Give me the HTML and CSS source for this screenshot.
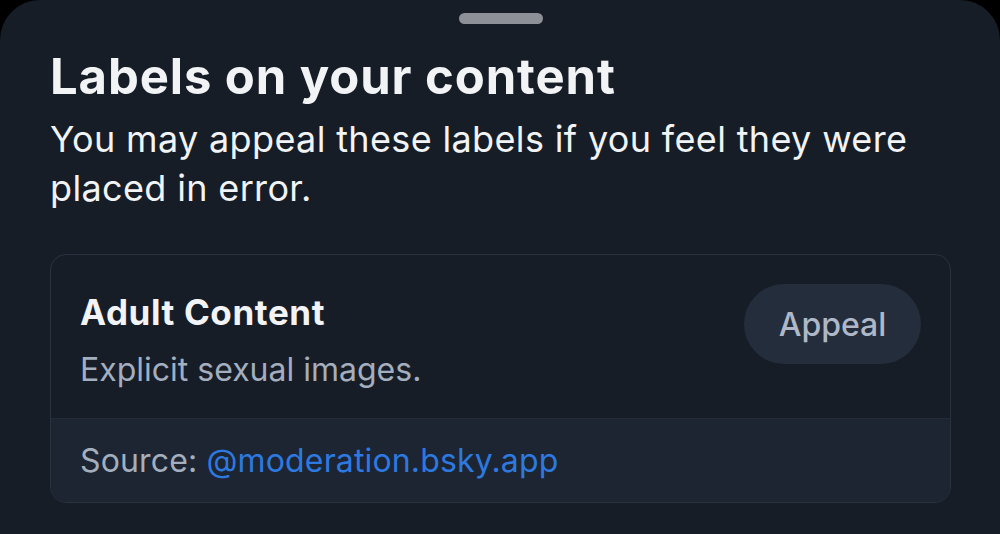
FILE: index.html
```html
<!DOCTYPE html>
<html>
<head>
<meta charset="utf-8">
<link rel="stylesheet" href="styles.css">
</head>
<body>
<div class="sheet">
  <div class="handle-row"><div class="handle"></div></div>
  <h1 class="title">Labels on your content</h1>
  <p class="subtitle">You may appeal these labels if you feel they were placed in error.</p>
  <div class="card">
    <div class="card-main">
      <div class="card-text">
        <div class="label-name">Adult Content</div>
        <div class="label-desc">Explicit sexual images.</div>
      </div>
      <button class="appeal">Appeal</button>
    </div>
    <div class="card-source">Source: <span class="link">@moderation.bsky.app</span></div>
  </div>
</div>
</body>
</html>
```
FILE: styles.css
```css
html, body {
  margin: 0;
  padding: 0;
  background: #000;
  width: 1000px;
  height: 534px;
  overflow: hidden;
}
.sheet {
  height: 534px;
  background: #161d27;
  border-radius: 40px 40px 0 0;
  padding: 0 49px 0 50px;
  font-family: Inter, "Noto Sans", sans-serif;
  color: #f1f3f5;
  box-sizing: border-box;
}
.handle-row {
  display: flex;
  justify-content: center;
  padding-top: 13px;
}
.handle {
  width: 84px;
  height: 11px;
  border-radius: 6px;
  background: #8d9197;
}
.title {
  margin: 23px 0 0 0;
  font-size: 49px;
  font-weight: 700;
  line-height: 60px;
  letter-spacing: 0.9px;
}
.subtitle {
  margin: 8px 0 0 0;
  font-size: 36px;
  line-height: 49px;
  font-weight: 400;
  letter-spacing: 0.35px;
  color: #f1f3f5;
  max-width: 880px;
}
.card {
  margin-top: 41px;
  border: 1px solid #29323f;
  border-radius: 16px;
  overflow: hidden;
}
.card-main {
  display: flex;
  align-items: flex-start;
  justify-content: space-between;
  padding: 29px 29px 28px 29px;
}
.card-text {
  padding-top: 6px;
}
.label-name {
  font-size: 35px;
  font-weight: 700;
  line-height: 44px;
  letter-spacing: 0.6px;
  color: #f1f3f5;
}
.label-desc {
  margin-top: 16px;
  font-size: 32px;
  line-height: 40px;
  color: #a3aebe;
}
.appeal {
  width: 177px;
  height: 80px;
  padding: 0;
  border: none;
  border-radius: 40px;
  background: #232d3c;
  color: #aeb8c7;
  font-family: Inter, "Noto Sans", sans-serif;
  font-size: 32px;
  font-weight: 500;
}
.card-source {
  background: #1c2531;
  border-top: 1px solid #222b37;
  padding: 22px 29px 21px;
  font-size: 32px;
  line-height: 40px;
  letter-spacing: 0.15px;
  color: #a3aebe;
}
.link {
  color: #2d79e0;
}
```
